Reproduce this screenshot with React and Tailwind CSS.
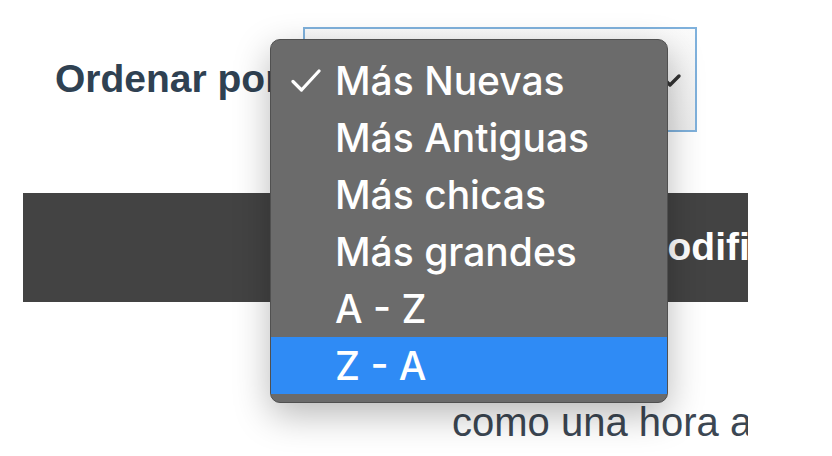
import React from "react";

const options = ["Más Nuevas", "Más Antiguas", "Más chicas", "Más grandes", "A - Z", "Z - A"];

function Check() {
  return (
    <svg width="30" height="24" viewBox="0 0 30 24" fill="none">
      <path d="M2 12.5 L10.5 21 L28 2" stroke="white" strokeWidth="3.2" strokeLinecap="round" strokeLinejoin="round" />
    </svg>
  );
}

export default function App() {
  const selected = 0;
  const active = 5;

  return (
    <div className="relative w-[832px] h-[456px] bg-white overflow-hidden font-['Liberation_Sans',Arial,sans-serif]">
      {/* page content */}
      <div className="ml-[23px] w-[725px] overflow-hidden pt-[27px]">
        <div className="flex items-center h-[105px]">
          <span className="pl-[32px] text-[39px] font-bold text-[#2f4152] whitespace-nowrap w-[280px]">Ordenar por</span>
          <div className="w-[394px] h-[105px] border-2 border-[#7fb1dc] bg-gradient-to-b from-[#fbfbfb] to-[#ededed] flex items-center justify-end pr-[12px]">
            <svg width="26" height="26" viewBox="0 0 26 26" fill="none">
              <path d="M4 9 L13 18 L22 9" stroke="#333" strokeWidth="3.4" strokeLinecap="round" strokeLinejoin="round" />
            </svg>
          </div>
        </div>

        <div className="mt-[61px] h-[109px] bg-[#434343] flex items-center pl-[612px]">
          <span className="text-white font-bold text-[39px] whitespace-nowrap">Modificado</span>
        </div>

        <div className="pl-[429px] pt-[100px]">
          <span className="text-[#3c4753] text-[40px] whitespace-nowrap leading-none">como una hora atrás</span>
        </div>
      </div>

      {/* open dropdown menu */}
      <div className="absolute left-[270px] top-[39px] w-[398px] h-[364px] rounded-[10px] bg-[#6b6b6b] border border-[#505050] shadow-[0_12px_36px_rgba(0,0,0,0.28)] py-[12px] font-['Inter',sans-serif]">
        {options.map((o, i) => (
          <div
            key={o}
            className={`flex items-center h-[57px] ${i === active ? "bg-[#2f8bf5]" : ""}`}
          >
            <div className="w-[64px] flex justify-center pl-[6px]">{i === selected && <Check />}</div>
            <span className="text-white font-medium text-[39px] leading-none whitespace-nowrap">{o}</span>
          </div>
        ))}
      </div>
    </div>
  );
}
